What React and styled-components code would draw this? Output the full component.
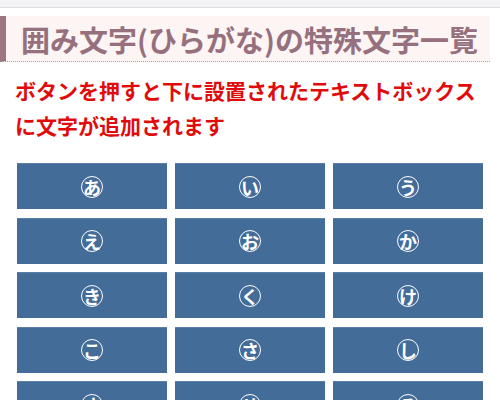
import React from "react";
import styled, { createGlobalStyle } from "styled-components";

const GlobalStyle = createGlobalStyle`
  body {
    margin: 0;
    background: #fff;
    font-family: "Noto Sans CJK JP", "Noto Sans", sans-serif;
  }
`;

const TopBar = styled.div`
  height: 7px;
  background: #f3f3f5;
  border-bottom: 1px solid #dcdce2;
`;

const Page = styled.div`
  padding: 8px 10px 0 0;
`;

const Heading = styled.h2`
  margin: 0;
  height: 45px;
  display: flex;
  align-items: center;
  padding-left: 15px;
  background: #fcf5f4;
  border-left: 6px solid #9e7580;
  border-bottom: 1px dotted #b89aa2;
  color: #96707d;
  font-size: 29px;
  font-weight: 600;
  white-space: nowrap;
`;

const Note = styled.p`
  margin: 11px 0 0 15px;
  color: #e00c0c;
  font-size: 21px;
  font-weight: 700;
  line-height: 35px;
`;

const Grid = styled.div`
  display: grid;
  grid-template-columns: repeat(3, 150px);
  column-gap: 8px;
  row-gap: 8.5px;
  margin: 20px 0 0 17px;
`;

const KanaButton = styled.button`
  height: 46px;
  border: none;
  border-top: 1px solid #5a80a8;
  background: #436c99;
  display: flex;
  align-items: center;
  justify-content: center;
  padding: 0;
  cursor: pointer;
`;

const Circled = styled.span`
  width: 20px;
  height: 20px;
  border: 1.5px solid #fff;
  border-radius: 50%;
  display: flex;
  align-items: center;
  justify-content: center;
  color: #fff;
  font-family: "Noto Sans CJK JP", sans-serif;
  font-size: 18px;
  font-weight: 700;
  line-height: 1;
`;

const kana = ["あ", "い", "う", "え", "お", "か", "き", "く", "け", "こ", "さ", "し", "す", "せ", "そ"];

export default function App() {
  return (
    <>
      <GlobalStyle />
      <TopBar />
      <Page>
        <Heading>囲み文字(ひらがな)の特殊文字一覧</Heading>
        <Note>
          ボタンを押すと下に設置されたテキストボックス
          <br />
          に文字が追加されます
        </Note>
        <Grid>
          {kana.map((k) => (
            <KanaButton key={k}>
              <Circled>{k}</Circled>
            </KanaButton>
          ))}
        </Grid>
      </Page>
    </>
  );
}
